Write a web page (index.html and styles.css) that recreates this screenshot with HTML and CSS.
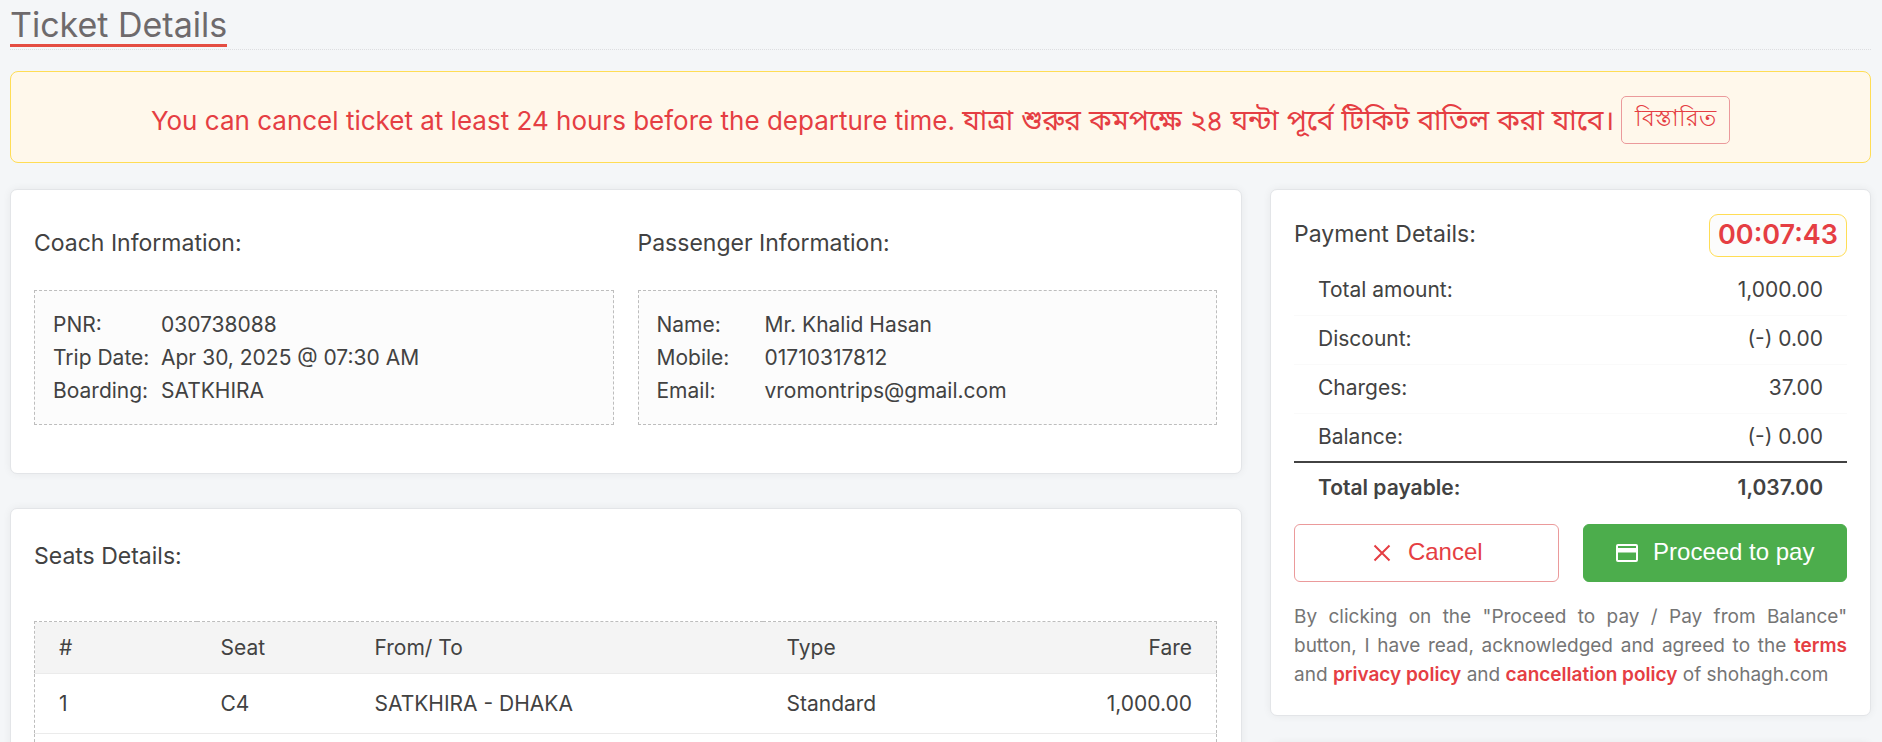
FILE: index.html
```html
<!DOCTYPE html>
<html lang="en">
<head>
<meta charset="utf-8">
<meta name="viewport" content="width=device-width, initial-scale=1">
<title>Ticket Details</title>
<link rel="stylesheet" href="styles.css">
</head>
<body>
<header class="page-head">
  <h1 class="page-title">Ticket Details</h1>
</header>
<div class="notice" role="alert">
  <p class="notice-text">You can cancel ticket at least 24 hours before the departure time. <span class="bn" lang="bn">যাত্রা শুরুর কমপক্ষে ২৪ ঘন্টা পূর্বে টিকিট বাতিল করা যাবে।</span></p>
  <button type="button" class="notice-btn" lang="bn">বিস্তারিত</button>
</div>
<main class="layout">
  <div class="column">
    <section class="card info">
      <div class="info-col">
        <h2 class="heading">Coach Information:</h2>
        <dl class="details">
          <dt>PNR:</dt><dd>030738088</dd>
          <dt>Trip Date:</dt><dd>Apr 30, 2025 @ 07:30 AM</dd>
          <dt>Boarding:</dt><dd>SATKHIRA</dd>
        </dl>
      </div>
      <div class="info-col">
        <h2 class="heading">Passenger Information:</h2>
        <dl class="details">
          <dt>Name:</dt><dd>Mr. Khalid Hasan</dd>
          <dt>Mobile:</dt><dd>01710317812</dd>
          <dt>Email:</dt><dd>vromontrips@gmail.com</dd>
        </dl>
      </div>
    </section>
    <section class="card seats">
      <h2 class="heading">Seats Details:</h2>
      <table class="seat-table">
        <colgroup><col class="c-num"><col class="c-seat"><col><col class="c-type"><col class="c-fare"></colgroup>
        <thead>
          <tr><th>#</th><th>Seat</th><th>From/ To</th><th>Type</th><th class="num">Fare</th></tr>
        </thead>
        <tbody>
          <tr><td>1</td><td>C4</td><td>SATKHIRA - DHAKA</td><td>Standard</td><td class="num">1,000.00</td></tr>
          <tr><td></td><td></td><td></td><td></td><td></td></tr>
        </tbody>
      </table>
    </section>
  </div>
  <aside class="column">
    <section class="card payment">
      <div class="payment-head">
        <h2 class="heading">Payment Details:</h2>
        <span class="timer" role="timer">00:07:43</span>
      </div>
      <table class="amounts">
        <tbody>
          <tr><th scope="row">Total amount:</th><td>1,000.00</td></tr>
          <tr><th scope="row">Discount:</th><td>(-) 0.00</td></tr>
          <tr><th scope="row">Charges:</th><td>37.00</td></tr>
          <tr><th scope="row">Balance:</th><td>(-) 0.00</td></tr>
        </tbody>
        <tfoot>
          <tr><th scope="row">Total payable:</th><td>1,037.00</td></tr>
        </tfoot>
      </table>
      <div class="actions">
        <button type="button" class="btn btn-cancel">
          <svg class="icon" viewBox="0 0 24 24" aria-hidden="true"><path d="M4.500 5.500l15 15M19.500 5.500l-15 15" fill="none" stroke="currentColor" stroke-width="2"/></svg>
          Cancel
        </button>
        <button type="button" class="btn btn-pay">
          <svg class="icon" viewBox="0 0 24 24" aria-hidden="true"><path d="M3 4h18q2 0 2 2v14q0 2-2 2H3q-2 0-2-2V6q0-2 2-2zM3 6v2h18V6zm0 6.500V20h18v-7.500z" fill="currentColor" fill-rule="evenodd"/></svg>
          Proceed to pay
        </button>
      </div>
      <p class="terms">By clicking on the "Proceed to pay / Pay from Balance" button, I have read, acknowledged and agreed to the <a href="#">terms</a> and <a href="#">privacy policy</a> and <a href="#">cancellation policy</a> of shohagh.com</p>
    </section>
    <section class="card next"></section>
  </aside>
</main>
</body>
</html>
```
FILE: styles.css
```css
* { box-sizing: border-box; }

body {
  margin: 0;
  padding: 0 11px 0 10px;
  background: #f4f6f8;
  color: #424242;
  font: 21px/33px Inter, "Liberation Sans", sans-serif;
}

h1, h2, p, dl, dd { margin: 0; font-weight: 400; }

.page-head {
  height: 50px;
  border-bottom: 1px dotted #dcdde0;
}

.page-title {
  display: inline-block;
  height: 47px;
  border-bottom: 3px solid #e44d42;
  color: #6e6a6c;
  font-size: 34px;
  line-height: 49px;
}

.notice {
  display: flex;
  align-items: center;
  justify-content: center;
  gap: 7px;
  margin-top: 21px;
  padding: 24px 20px 18px;
  border: 1px solid #ffdd55;
  border-radius: 8px;
  background: #fff8eb;
  color: #e53e43;
}

.notice-text { font-size: 26px; line-height: 40px; }

.bn { font-family: Inter, "Noto Sans Bengali", sans-serif; font-size: 28px; }

.notice-btn {
  height: 48px;
  padding: 0 13px 4px;
  border: 1px solid #eb9a9b;
  border-radius: 5px;
  background: none;
  color: inherit;
  font: inherit;
  font-size: 23px;
}

.layout {
  display: grid;
  grid-template-columns: 1232fr 601fr;
  align-items: start;
  gap: 28px;
  margin-top: 26px;
}

.column { display: grid; gap: 34px; }
aside.column { gap: 27px; }

.card {
  padding: 24px;
  border: 1px solid #e3e5e8;
  border-radius: 7px;
  background: #fff;
  box-shadow: 0 0 8px rgba(0, 0, 0, .06);
}

.heading { font-size: 23px; line-height: 32px; }

.info {
  display: grid;
  grid-template-columns: 1fr 1fr;
  gap: 24px;
  padding: 37px 24px 48px 23px;
}

.details {
  display: grid;
  grid-template-columns: 108px 1fr;
  margin-top: 31px;
  padding: 17px 18px;
  border: 1px dashed #bdbdbd;
  background: #fcfcfc;
}

.seats { padding: 31px 24px 40px 23px; }

.seat-table {
  width: 100%;
  margin-top: 49px;
  table-layout: fixed;
  border: 1px dashed #bdbdbd;
  border-collapse: collapse;
}

.c-num { width: 162px; }
.c-seat { width: 154px; }
.c-type { width: 229px; }
.c-fare { width: 225px; }

.seat-table th,
.seat-table td {
  height: 60px;
  padding: 0 24px;
  border-bottom: 1px solid #ebebeb;
  font-weight: 400;
  text-align: left;
}
.seat-table th { height: 52px; background: #f4f4f4; }
.seat-table .num { text-align: right; }

.payment { padding: 24px 23px 26px; }

.payment-head {
  display: flex;
  align-items: flex-start;
  justify-content: space-between;
}
.payment-head .heading { line-height: 40px; }

.timer {
  padding: 0 8px 1px;
  border: 1px solid #ffdd55;
  border-radius: 9px;
  background: #fcfcfc;
  color: #e53e43;
  font-size: 27px;
  font-weight: 600;
  line-height: 40px;
}

.amounts {
  width: 100%;
  margin-top: 9px;
  border-collapse: collapse;
}
.amounts th,
.amounts td {
  height: 49px;
  padding: 0 24px 2px;
  border-bottom: 1px solid #fafafa;
  font-weight: 400;
  text-align: left;
}
.amounts td { text-align: right; }
.amounts tfoot th,
.amounts tfoot td {
  height: 52px;
  border-top: 2px solid #424242;
  border-bottom: 0;
  font-weight: 600;
}

.actions {
  display: grid;
  grid-template-columns: 1fr 1fr;
  gap: 24px;
  margin-top: 10px;
}

.btn {
  display: flex;
  align-items: center;
  justify-content: center;
  gap: 14px;
  height: 58px;
  padding-bottom: 3px;
  border: 1px solid #eb9a9b;
  border-radius: 6px;
  background: #fff;
  color: #e53e43;
  font: 24px "Liberation Sans", sans-serif;
}
.btn-pay { border-color: #4cad4c; background: #4cad4c; color: #fff; }

.icon { width: 24px; height: 24px; }

.terms {
  margin-top: 20px;
  color: #757575;
  font-size: 19px;
  line-height: 29px;
  text-align: justify;
}
.terms a { color: #e53e43; font-weight: 600; text-decoration: none; }

.next { height: 80px; }
```
